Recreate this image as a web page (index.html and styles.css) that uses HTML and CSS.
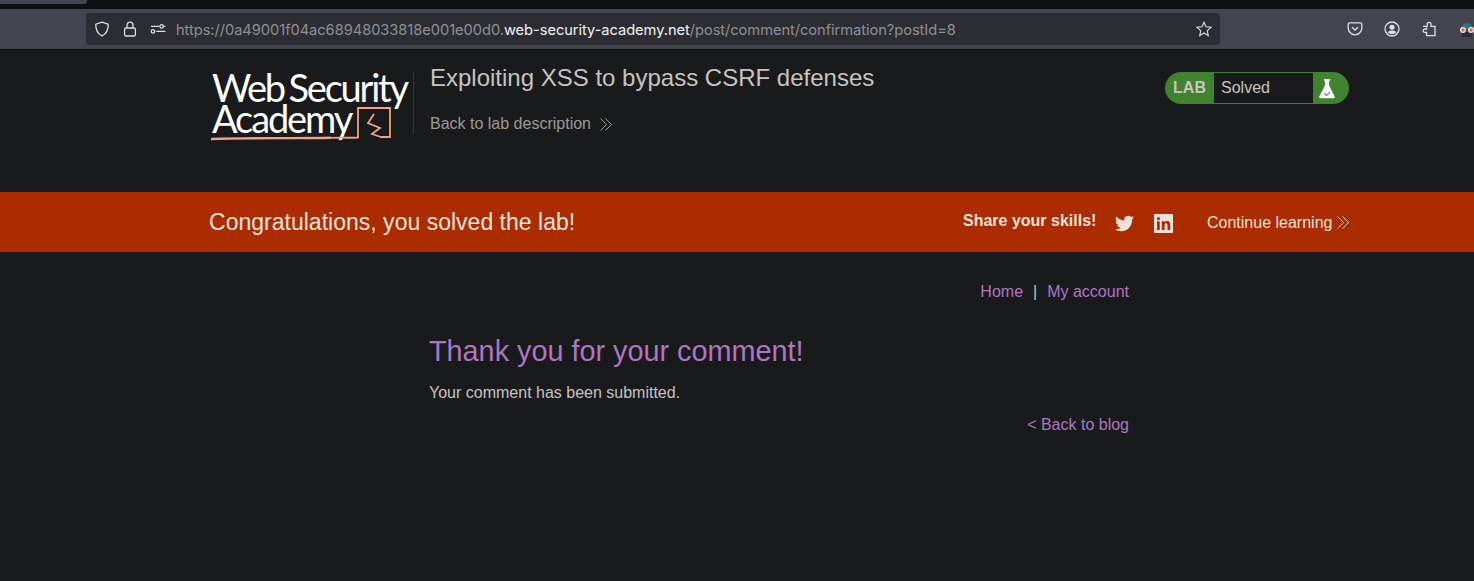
FILE: index.html
```html
<!DOCTYPE html>
<html lang="en">
<head>
<meta charset="utf-8">
<title>Exploiting XSS to bypass CSRF defenses</title>
<link rel="stylesheet" href="styles.css">
</head>
<body>
<div class="tabstrip"><div class="tab-stub"></div></div>
<div class="toolbar">
  <div class="urlbar">
    <svg class="ic ic-shield" viewBox="0 0 16 16"><path d="M8 1.200 14.200 3.200C14.400 8.800 12.600 12.600 8 14.900 3.400 12.600 1.600 8.800 1.800 3.200Z"/></svg>
    <svg class="ic ic-lock" viewBox="0 0 16 16"><rect x="2.600" y="7" width="10.800" height="8" rx="1.600"/><path d="M5 7V4.200a3 3 0 0 1 6 0V7"/></svg>
    <svg class="ic ic-perm" viewBox="0 0 16 16"><circle cx="3" cy="10.400" r="1.700"/><circle cx="11.600" cy="5.400" r="1.700"/><path d="M1 5.400H9M14 5.400H15.400M6.400 10.400H15.400"/></svg>
    <span class="url"><span class="dim">https://0a49001f04ac68948033818e001e00d0.</span><span class="host">web-security-academy.net</span><span class="dim">/post/comment/confirmation?postId=8</span></span>
    <svg class="ic ic-star" viewBox="0 0 16 16"><path d="M8 1.200 10 5.800 15 6.300 11.200 9.600 12.300 14.600 8 12 3.700 14.600 4.800 9.600 1 6.300 6 5.800Z"/></svg>
  </div>
  <div class="tools">
    <svg class="ic" viewBox="0 0 16 16"><path d="M2.600 1.800H13.400A1.400 1.400 0 0 1 14.800 3.200V7A6.800 6.800 0 0 1 1.200 7V3.200A1.400 1.400 0 0 1 2.600 1.800Z"/><path d="M5 6.200 8 9 11 6.200"/></svg>
    <svg class="ic" viewBox="0 0 16 16"><circle cx="8" cy="8" r="7"/><circle class="fill" cx="8" cy="6.200" r="2.500"/><path class="fill" d="M3.600 11.600C4.400 10 6 9.600 8 9.600S11.600 10 12.400 11.600C11.200 12.800 9.800 13.200 8 13.200S4.800 12.800 3.600 11.600Z"/></svg>
    <svg class="ic" viewBox="0 0 16 16"><path d="M2 5.400H6.200V3.200A1.900 1.900 0 0 1 10 3.200V5.400H14V14.600H5.600V11.400H3.400A1.800 1.800 0 0 1 3.400 8H5.600V6.600"/></svg>
    <svg class="avatar" viewBox="0 0 18 18"><path fill="#2f6f80" d="M3 9a6 6 0 0 1 12 0Z"/><rect x="4" y="12" width="10" height="5" fill="#2b2d33"/><circle cx="5" cy="10" r="3" fill="#e8e8e8"/><circle cx="13" cy="10" r="3" fill="#e8e8e8"/><circle cx="5" cy="10" r="1.700" fill="#e8603c"/><circle cx="13" cy="10" r="1.700" fill="#e8603c"/></svg>
  </div>
</div>

<header class="lab-header">
  <div class="logo">
    <div class="logo-line">Web Security</div>
    <div class="logo-line logo-second">Academy</div>
    <svg class="logo-mark" viewBox="0 0 202 72"><path class="under" d="M0 67C40 65.500 90 66.500 120 65.800"/><path d="M120 65.800C130 65.500 140 66 147 65.500V36H179V65H169"/><path d="M163 42 157 51 169 56 161 62 170 65"/></svg>
  </div>
  <div class="title-block">
    <h2 class="lab-title">Exploiting XSS to bypass CSRF defenses</h2>
    <a class="back-link">Back to lab description<svg class="chev chev-wide" viewBox="0 0 14 14"><path d="M1.500 1 7.500 7 1.500 13M6.500 1 12.500 7 6.500 13"/></svg></a>
  </div>
  <div class="status">
    <span class="status-lab">LAB</span>
    <span class="status-text">Solved</span>
    <span class="status-icon"><svg viewBox="0 0 20 24"><path class="flask" d="M6.500 1H13.500V3H12.400V8.500L19 21.500Q19 23 17.500 23H2.500Q1 23 1 21.500L7.600 8.500V3H6.500Z"/><path class="check" d="M7 17.500 9.500 20 13.500 16"/></svg></span>
  </div>
</header>

<section class="banner">
  <span class="congrats">Congratulations, you solved the lab!</span>
  <div class="share">
    <strong class="share-label">Share your skills!</strong>
    <svg class="social tw" viewBox="0 0 24 24"><path d="M23.950 4.570a10 10 0 0 1-2.820.770 4.960 4.960 0 0 0 2.160-2.720c-.950.550-2 .950-3.130 1.180a4.920 4.920 0 0 0-8.380 4.480C7.690 8.100 4.070 6.130 1.640 3.160a4.820 4.820 0 0 0-.660 2.470c0 1.710.870 3.210 2.190 4.100a4.900 4.900 0 0 1-2.230-.610v.060a4.920 4.920 0 0 0 3.950 4.830 5 5 0 0 1-2.210.080 4.940 4.940 0 0 0 4.600 3.420A9.870 9.870 0 0 1 0 19.540a14 14 0 0 0 7.560 2.210c9.050 0 14-7.500 14-13.980 0-.210 0-.420-.020-.630a9.940 9.940 0 0 0 2.410-2.570z"/></svg>
    <svg class="social in" viewBox="0 0 24 24"><path d="M1.500 0h21A1.500 1.500 0 0 1 24 1.500v21a1.500 1.500 0 0 1-1.500 1.500h-21A1.500 1.500 0 0 1 0 22.500v-21A1.500 1.500 0 0 1 1.500 0Zm2.300 9.200v11h3.500v-11Zm1.750-5.300a2 2 0 1 0 0 4 2 2 0 0 0 0-4Zm4.300 5.300v11h3.500v-5.700c0-1.500.4-2.700 2-2.700s1.700 1.300 1.700 2.800v5.600h3.500v-6.300c0-3-.8-5.100-3.900-5.100-1.700 0-2.700.8-3.300 1.700V9.200Z" fill-rule="evenodd"/></svg>
  </div>
  <a class="continue">Continue learning<svg class="chev" viewBox="0 0 14 14"><path d="M1.500 1 7.500 7 1.500 13M6.500 1 12.500 7 6.500 13"/></svg></a>
</section>

<main class="content">
  <nav class="top-links"><a>Home</a><span class="sep">|</span><a>My account</a></nav>
  <h1 class="thanks">Thank you for your comment!</h1>
  <p class="note">Your comment has been submitted.</p>
  <div class="back-row"><a>&lt; Back to blog</a></div>
</main>
</body>
</html>
```

FILE: styles.css
```css
* { box-sizing: border-box; }
html, body { margin: 0; height: 100%; }
body {
  background: #191a1c;
  color: #c6c4c0;
  font-family: "Liberation Sans", Arial, sans-serif;
  overflow: hidden;
}
.tabstrip { height: 9px; background: #0e0f13; }
.tab-stub { width: 87px; height: 4px; background: #42454d; border-radius: 0 0 3px 0; }
.toolbar {
  height: 41px;
  background: #42454d;
  border-bottom: 1px solid #0c0c0e;
  display: flex;
  align-items: flex-start;
  padding: 4px 0 0 86px;
}
.urlbar {
  flex: none;
  width: 1134px;
  height: 32px;
  background: #2c2d32;
  border-radius: 4px;
  display: flex;
  align-items: center;
  padding: 0 8px;
}
.ic { width: 16px; height: 16px; fill: none; stroke: #e0e0e4; stroke-width: 1.300; flex: none; }
.ic .fill { fill: #e0e0e4; stroke: none; }
.ic-lock { margin-left: 12px; }
.ic-perm { margin-left: 12px; }
.url {
  font-family: "Inter", "Noto Sans", sans-serif;
  font-size: 14.660px;
  margin-left: 10px;
  padding-top: 2px;
  flex: 1;
  white-space: nowrap;
  letter-spacing: -0.050px;
}
.dim { color: #8f9094; }
.host { color: #f3f3f5; }
.ic-star { stroke-width: 1.100; }
.tools { flex: none; display: flex; align-items: center; height: 32px; margin-left: 127px; gap: 21px; }
.avatar { width: 18px; height: 18px; }

.lab-header { height: 142px; display: flex; align-items: flex-start; padding-left: 211px; }
.logo { width: 203px; height: 62px; margin-top: 22px; border-right: 1px solid #35363a; position: relative; color: #fff; font-family: "Lato", sans-serif; }
.logo-line { font-size: 38px; line-height: 31px; letter-spacing: -2.200px; word-spacing: -3px; white-space: nowrap; padding-left: 1px; }
.logo-second { letter-spacing: -2.100px; }
.logo-mark { position: absolute; left: 0; top: 0; width: 202px; height: 72px; fill: none; stroke: #f59f86; stroke-width: 1.800; }
.under { stroke-width: 2.400; }
.title-block { margin-left: 16px; padding-top: 13px; }
.lab-title { margin: 0; font-size: 24px; font-weight: 400; line-height: 30px; color: #c6c4c0; }
.back-link { display: flex; align-items: center; margin-top: 20px; font-size: 16px; line-height: 22px; color: #9d9b96; }
.chev { width: 14px; height: 15px; fill: none; stroke: currentColor; stroke-width: 1; margin-left: 4px; flex: none; }
.chev-wide { margin-left: 8px; }
.status {
  margin-left: auto;
  margin-right: 125px;
  margin-top: 22px;
  width: 184px;
  height: 32px;
  border-radius: 16px;
  background: #3f8230;
  display: flex;
  align-items: center;
  overflow: hidden;
}
.status-lab { width: 49px; text-align: center; font-weight: 700; font-size: 16px; color: #c6c6bc; }
.status-text { width: 99px; height: 30px; background: #191a1c; line-height: 30px; font-size: 16px; padding-left: 7px; color: #c6c4c0; }
.status-icon { width: 36px; display: flex; justify-content: center; padding-right: 9px; }
.status-icon svg { width: 18px; height: 21px; }
.flask { fill: #fff; }
.check { fill: none; stroke: #666; stroke-width: 1.200; }

.banner { height: 60px; background: #ab2c00; display: flex; align-items: center; padding-left: 209px; color: #f0e2da; }
.congrats { font-size: 23.040px; width: 754px; }
.share { display: flex; align-items: center; width: 244px; padding-bottom: 2px; }
.share-label { font-size: 16px; }
.social { fill: #f0e2da; width: 19px; height: 19px; flex: none; margin-top: 4px; }
.tw { margin-left: 19px; }
.in { margin-left: 20px; }
.continue { display: flex; align-items: center; font-size: 16px; line-height: 20px; padding-top: 1px; }

.content { width: 700px; margin-left: 429px; padding-top: 30px; }
.top-links { display: flex; justify-content: flex-end; font-size: 16px; line-height: 20px; color: #ae76c2; }
.sep { color: #c6c4c0; margin: 0 10px; }
.thanks { margin: 31px 0 0; font-size: 28.800px; line-height: 36px; font-weight: 400; color: #ae76c2; }
.note { margin: 14px 0 0; font-size: 16px; line-height: 20px; color: #c6c4c0; }
.back-row { margin-top: 12px; text-align: right; font-size: 16px; line-height: 20px; color: #ae76c2; }
```
